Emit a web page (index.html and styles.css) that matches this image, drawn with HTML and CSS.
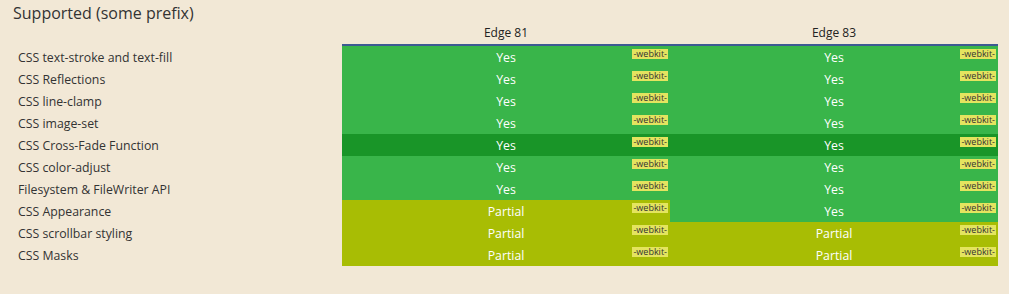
FILE: index.html
```html
<!DOCTYPE html>
<html lang="en">
<head>
<meta charset="utf-8">
<title>Supported (some prefix)</title>
<link rel="stylesheet" href="styles.css">
</head>
<body>
<section class="support">
  <h2 class="support-title">Supported (some prefix)</h2>
  <div class="support-grid">
    <div class="head-spacer"></div>
    <div class="head-cell">Edge 81</div>
    <div class="head-cell">Edge 83</div>

    <div class="feature">CSS text-stroke and text-fill</div>
    <div class="cell yes">Yes<span class="prefix">-webkit-</span></div>
    <div class="cell yes">Yes<span class="prefix">-webkit-</span></div>

    <div class="feature">CSS Reflections</div>
    <div class="cell yes">Yes<span class="prefix">-webkit-</span></div>
    <div class="cell yes">Yes<span class="prefix">-webkit-</span></div>

    <div class="feature">CSS line-clamp</div>
    <div class="cell yes">Yes<span class="prefix">-webkit-</span></div>
    <div class="cell yes">Yes<span class="prefix">-webkit-</span></div>

    <div class="feature">CSS image-set</div>
    <div class="cell yes">Yes<span class="prefix">-webkit-</span></div>
    <div class="cell yes">Yes<span class="prefix">-webkit-</span></div>

    <div class="feature">CSS Cross-Fade Function</div>
    <div class="cell yes active">Yes<span class="prefix">-webkit-</span></div>
    <div class="cell yes active">Yes<span class="prefix">-webkit-</span></div>

    <div class="feature">CSS color-adjust</div>
    <div class="cell yes">Yes<span class="prefix">-webkit-</span></div>
    <div class="cell yes">Yes<span class="prefix">-webkit-</span></div>

    <div class="feature">Filesystem &amp; FileWriter API</div>
    <div class="cell yes">Yes<span class="prefix">-webkit-</span></div>
    <div class="cell yes">Yes<span class="prefix">-webkit-</span></div>

    <div class="feature">CSS Appearance</div>
    <div class="cell partial">Partial<span class="prefix">-webkit-</span></div>
    <div class="cell yes">Yes<span class="prefix">-webkit-</span></div>

    <div class="feature">CSS scrollbar styling</div>
    <div class="cell partial">Partial<span class="prefix">-webkit-</span></div>
    <div class="cell partial">Partial<span class="prefix">-webkit-</span></div>

    <div class="feature">CSS Masks</div>
    <div class="cell partial">Partial<span class="prefix">-webkit-</span></div>
    <div class="cell partial">Partial<span class="prefix">-webkit-</span></div>
  </div>
</section>
</body>
</html>
```

FILE: styles.css
```css
html, body {
  margin: 0;
  padding: 0;
  background: #f2e8d6;
}

body {
  font-family: "Open Sans", "Liberation Sans", sans-serif;
  color: #333;
}

.support {
  padding: 0 11px 0 13px;
}

.support-title {
  margin: 0;
  font-size: 16px;
  font-weight: 400;
  line-height: 26px;
  color: #333;
}

/* header row (20px incl. 2px rule) + ten 22px feature rows */
.support-grid {
  display: grid;
  grid-template-columns: 329px 328px 328px;
  grid-template-rows: 20px repeat(10, 22px);
}

.head-cell {
  font-size: 12px;
  line-height: 14px;
  padding-bottom: 4px;
  text-align: center;
  color: #222;
  border-bottom: 2px solid #3d5a92;
}

.feature {
  padding: 1px 0 0 5px;
  font-size: 12.3px;
  line-height: 21px;
  color: #333;
}

.cell {
  position: relative;
  padding-top: 1px;
  line-height: 21px;
  font-size: 12.3px;
  text-align: center;
  color: #fff;
}

.cell.yes {
  background: #39b54a;
}

.cell.partial {
  background: #a8bd04;
}

.cell.yes.active {
  background: #199528;
}

.prefix {
  position: absolute;
  top: 3px;
  right: 2px;
  padding: 0 1px;
  background: #e4e45f;
  color: #333;
  font-size: 9px;
  line-height: 10px;
}
```
